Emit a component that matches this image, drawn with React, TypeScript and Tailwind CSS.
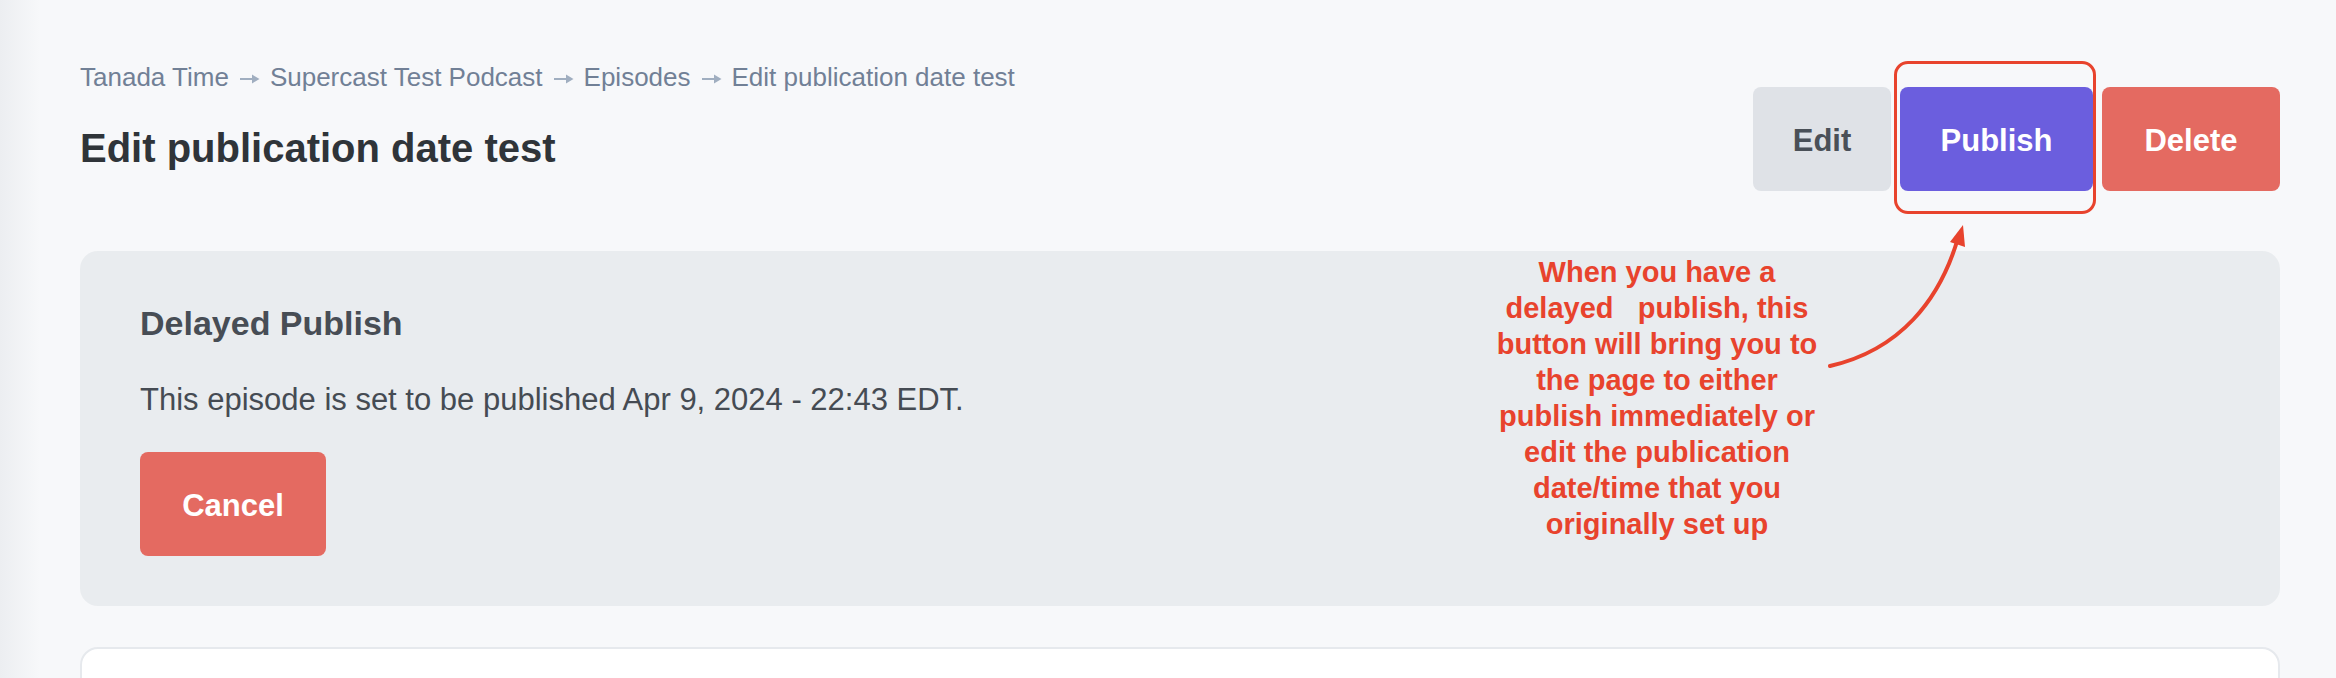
export default function App() {
    const crumbs = ["Tanada Time", "Supercast Test Podcast", "Episodes", "Edit publication date test"]
    const note = [
        "When you have a",
        "delayed\u00a0\u00a0 publish, this",
        "button will bring you to",
        "the page to either",
        "publish immediately or",
        "edit the publication",
        "date/time that you",
        "originally set up",
    ]
    return (
        <div className="relative flex h-[678px] overflow-hidden bg-[#f7f8fa] font-['Liberation_Sans',Arial,sans-serif]">
            <div className="w-[40px] shrink-0 bg-gradient-to-r from-[#eceef1] to-[#f7f8fa]" />
            <main className="flex-1 pl-[40px] pr-[56px]">
                <div className="flex items-start justify-between pt-[58px]">
                    <div>
                        <div className="flex items-center text-[26px] leading-[39px] text-[#718096]">
                            {crumbs.map((c, i) => (
                                <span key={c} className="flex items-center">
                                    {i > 0 && (
                                        <svg className="mx-[10px] mt-[2px]" width="21" height="12" viewBox="0 0 21 12">
                                            <path d="M1 6 H16" stroke="#a0aec0" strokeWidth="2" />
                                            <path d="M13 1.5 L20.5 6 L13 10.5 Z" fill="#a0aec0" />
                                        </svg>
                                    )}
                                    {c}
                                </span>
                            ))}
                        </div>
                        <h1 className="mt-[21px] text-[40px] font-bold leading-[60px] text-[#2f3439]">Edit publication date test</h1>
                    </div>
                    <div className="mt-[29px] flex gap-[9px]">
                        <button className="h-[104px] w-[138px] rounded-[8px] bg-[#dfe2e7] pt-[5px] text-[31px] font-bold text-[#4a5058]">Edit</button>
                        <button className="h-[104px] w-[193px] rounded-[8px] bg-[#6b5ede] pt-[5px] text-[31px] font-bold text-white">Publish</button>
                        <button className="h-[104px] w-[178px] rounded-[8px] bg-[#e46a61] pt-[5px] text-[31px] font-bold text-white">Delete</button>
                    </div>
                </div>

                <section className="mt-[60px] h-[355px] rounded-[18px] bg-[#e9ecef] px-[60px] pt-[47px]">
                    <h2 className="text-[34px] font-bold leading-[51px] text-[#474d55]">Delayed Publish</h2>
                    <p className="mt-[28px] text-[31px] leading-[46px] text-[#454b53]">This episode is set to be published Apr 9, 2024 - 22:43 EDT.</p>
                    <button className="mt-[29px] h-[104px] w-[186px] rounded-[8px] bg-[#e46a61] pt-[5px] text-[31px] font-bold text-white">Cancel</button>
                </section>

                <section className="mt-[41px] h-[200px] rounded-[18px] border-2 border-[#e6e9ed] bg-white" />
            </main>

            {/* annotation overlay */}
            <div className="absolute left-[1894px] top-[61px] h-[153px] w-[202px] rounded-[14px] border-[3.5px] border-[#e8432d]" />
            <div className="absolute left-[1457px] top-[254px] w-[400px] text-center text-[29px] font-bold leading-[36px] text-[#e8432d]">
                {note.map((l) => (
                    <div key={l}>{l}</div>
                ))}
            </div>
            <svg className="pointer-events-none absolute left-0 top-0" width="2336" height="678" viewBox="0 0 2336 678">
                <path d="M1830 366 C1900 350 1940 300 1958 238" fill="none" stroke="#e8432d" strokeWidth="4" strokeLinecap="round" />
                <path d="M1963 225 L1965 247 L1950 242 Z" fill="#e8432d" />
            </svg>
        </div>
    )
}
